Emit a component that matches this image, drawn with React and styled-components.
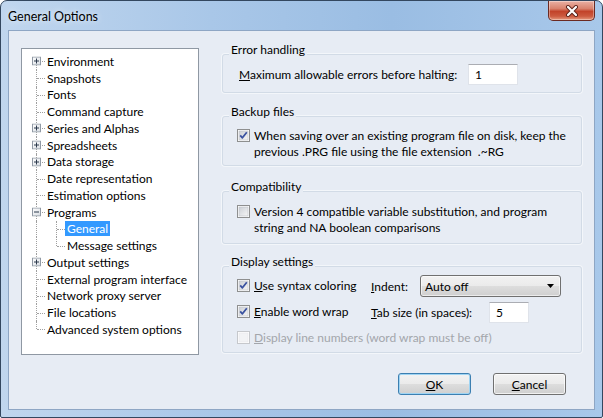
import React from 'react';
import styled, { createGlobalStyle } from 'styled-components';

const GlobalStyle = createGlobalStyle`
  html, body {
    margin: 0;
    padding: 0;
    background: #ffffff;
  }
  body {
    font-family: Lato, 'Liberation Sans', sans-serif;
    font-size: 12px;
    color: #000000;
  }
`;

const Window = styled.div`
  width: 603px;
  height: 418px;
  box-sizing: border-box;
  display: flex;
  flex-direction: column;
  border: 1px solid #33475f;
  border-radius: 7px 7px 2px 2px;
  background: linear-gradient(90deg, #c0d6ee 0%, #a9c7e8 35%, #9abde3 65%, #a8c8ea 100%);
  padding: 0 7px 7px 7px;
  overflow: hidden;
`;

const TitleBar = styled.div`
  flex: none;
  height: 29px;
  display: flex;
  align-items: flex-start;
  justify-content: space-between;
`;

const Title = styled.span`
  margin-top: 8px;
  font-size: 12.5px;
  color: #000000;
  text-shadow: 0 0 6px rgba(255, 255, 255, 0.9);
`;

const CloseButton = styled.div`
  width: 47px;
  height: 20px;
  box-sizing: border-box;
  border: 1px solid #6b2a22;
  border-top: none;
  border-radius: 0 0 5px 5px;
  background: linear-gradient(180deg, #eab1a4 0%, #d9826d 40%, #c2432a 55%, #cc5a3f 80%, #e59a7f 100%);
  display: flex;
  align-items: center;
  justify-content: center;
  box-shadow: inset 0 0 0 1px rgba(255, 255, 255, 0.35);
`;

const Client = styled.div`
  flex: 1;
  min-height: 0;
  display: flex;
  flex-direction: column;
  border: 1px solid #8ea6c4;
  background: #e7ecf4;
  padding: 17px 28px 0 12px;
`;

const Body = styled.div`
  display: flex;
  align-items: flex-start;
`;

const Tree = styled.div`
  width: 178px;
  height: 307px;
  flex: none;
  box-sizing: border-box;
  border: 1px solid #8f98a3;
  background: #ffffff;
  padding: 4px 0 0 9px;
`;

const TreeRow = styled.div`
  height: 16.75px;
  display: flex;
  align-items: stretch;
`;

const Guide = styled.div`
  width: 20px;
  flex: none;
  position: relative;
  ${(p) =>
    p.$on &&
    `&::before {
      content: '';
      position: absolute;
      left: 5px;
      top: 0;
      bottom: 0;
      border-left: 1px dotted #a0a0a0;
    }`}
`;

const Connector = styled.div`
  width: 14px;
  flex: none;
  position: relative;
  &::before {
    content: '';
    position: absolute;
    left: 5px;
    top: ${(p) => (p.$first ? '50%' : '0')};
    bottom: ${(p) => (p.$last ? '50%' : '0')};
    border-left: 1px dotted #a0a0a0;
  }
  &::after {
    content: '';
    position: absolute;
    left: 6px;
    right: 0;
    top: 50%;
    border-top: 1px dotted #a0a0a0;
  }
`;

const Expander = styled.svg`
  position: absolute;
  left: 1px;
  top: 50%;
  transform: translateY(-50%);
  z-index: 1;
`;

const TreeLabel = styled.span`
  align-self: center;
  padding: 0 2px;
  line-height: 15px;
  white-space: nowrap;
  background: ${(p) => (p.$selected ? '#3399ff' : 'transparent')};
  color: ${(p) => (p.$selected ? '#ffffff' : '#000000')};
`;

const Panel = styled.div`
  margin-left: 23px;
  margin-top: 6px;
  width: 360px;
  flex: none;
  display: flex;
  flex-direction: column;
`;

const Group = styled.div`
  position: relative;
  border: 1px solid #d2dbe6;
  border-radius: 3px;
  box-shadow: 0 0 0 1px rgba(255, 255, 255, 0.5);
  margin-top: ${(p) => p.$gap || 0}px;
  padding: ${(p) => p.$pad};
`;

const GroupTitle = styled.span`
  position: absolute;
  left: 6px;
  top: -13px;
  padding: 0 2px;
  line-height: 15px;
  background: #e7ecf4;
`;

const Row = styled.div`
  display: flex;
  align-items: center;
  height: ${(p) => p.$h || 26}px;
`;

const Label = styled.span`
  white-space: nowrap;
  color: ${(p) => (p.$disabled ? '#a3a6ab' : '#000000')};
  width: ${(p) => (p.$w ? `${p.$w}px` : 'auto')};
  flex: none;
`;

const U = styled.span`
  text-decoration: underline;
`;

const TextBox = styled.div`
  width: ${(p) => p.$w}px;
  height: 21px;
  flex: none;
  box-sizing: border-box;
  border: 1px solid #dfe3ea;
  border-top-color: #abadb3;
  background: #ffffff;
  padding-left: 6px;
  display: flex;
  align-items: center;
`;

const CheckWrap = styled.label`
  display: flex;
  align-items: flex-start;
  gap: 4px;
  line-height: 16px;
  white-space: nowrap;
  color: ${(p) => (p.$disabled ? '#a3a6ab' : '#000000')};
  width: ${(p) => (p.$w ? `${p.$w}px` : 'auto')};
  flex: none;
`;

const CheckSvg = styled.svg`
  flex: none;
  margin-top: 1px;
`;

const Select = styled.div`
  width: 141px;
  height: 22px;
  flex: none;
  box-sizing: border-box;
  border: 1px solid #707070;
  border-radius: 3px;
  background: linear-gradient(180deg, #f2f2f2 0%, #ebebeb 48%, #dddddd 52%, #cfcfcf 100%);
  box-shadow: inset 0 0 0 1px rgba(255, 255, 255, 0.6);
  display: flex;
  align-items: center;
  justify-content: space-between;
  padding: 0 6px 0 4px;
`;

const Footer = styled.div`
  display: flex;
  justify-content: flex-end;
  gap: 22px;
  margin-top: 18px;
`;

const Button = styled.div`
  width: 73px;
  height: 22px;
  box-sizing: border-box;
  border: 1px solid ${(p) => (p.$default ? '#3c7fb1' : '#707070')};
  border-radius: 3px;
  background: linear-gradient(180deg, #f2f2f2 0%, #ebebeb 48%, #dddddd 52%, #cfcfcf 100%);
  box-shadow: inset 0 0 0 1px ${(p) => (p.$default ? '#9fd4f3' : 'rgba(255,255,255,0.7)')};
  display: flex;
  align-items: center;
  justify-content: center;
`;

const PlusMinus = ({ minus }) => (
  <Expander width="9" height="9" viewBox="0 0 9 9">
    <defs>
      <linearGradient id={minus ? 'gm' : 'gp'} x1="0" y1="0" x2="1" y2="1">
        <stop offset="0" stopColor="#ffffff" />
        <stop offset="1" stopColor="#d8dde3" />
      </linearGradient>
    </defs>
    <rect x="0.5" y="0.5" width="8" height="8" fill={`url(#${minus ? 'gm' : 'gp'})`} stroke="#919aa5" />
    <path d="M2 4.5h5" stroke="#2d3a4d" />
    {!minus && <path d="M4.5 2v5" stroke="#2d3a4d" />}
  </Expander>
);

const CheckBox = ({ checked, disabled }) => (
  <CheckSvg width="13" height="13" viewBox="0 0 13 13">
    <defs>
      <linearGradient id="cbg" x1="0" y1="0" x2="1" y2="1">
        <stop offset="0" stopColor="#cbcfd5" />
        <stop offset="1" stopColor="#f6f6f6" />
      </linearGradient>
    </defs>
    <rect x="0.5" y="0.5" width="12" height="12" fill="#ffffff" stroke={disabled ? '#c6c8cc' : '#8e8f8f'} />
    <rect x="2" y="2" width="9" height="9" fill={disabled ? '#f2f3f5' : 'url(#cbg)'} stroke={disabled ? '#e6e7ea' : '#bcc0c6'} strokeWidth="0.6" />
    {checked && (
      <path d="M3.2 6.4 L5.4 8.8 L9.8 3.2" fill="none" stroke="#3a52a0" strokeWidth="1.8" strokeLinejoin="round" />
    )}
  </CheckSvg>
);

const treeData = [
  { label: 'Environment', exp: 'plus' },
  { label: 'Snapshots' },
  { label: 'Fonts' },
  { label: 'Command capture' },
  { label: 'Series and Alphas', exp: 'plus' },
  { label: 'Spreadsheets', exp: 'plus' },
  { label: 'Data storage', exp: 'plus' },
  { label: 'Date representation' },
  { label: 'Estimation options' },
  {
    label: 'Programs',
    exp: 'minus',
    children: [{ label: 'General', selected: true }, { label: 'Message settings' }],
  },
  { label: 'Output settings', exp: 'plus' },
  { label: 'External program interface' },
  { label: 'Network proxy server' },
  { label: 'File locations' },
  { label: 'Advanced system options' },
];

const flatten = (items, depth = 0, guides = []) =>
  items.flatMap((item, i) => {
    const last = i === items.length - 1;
    const row = { ...item, depth, guides, first: depth === 0 && i === 0, last };
    const kids = item.children ? flatten(item.children, depth + 1, [...guides, !last]) : [];
    return [row, ...kids];
  });

const rows = flatten(treeData);

export default function App() {
  return (
    <>
      <GlobalStyle />
      <Window>
        <TitleBar>
          <Title>General Options</Title>
          <CloseButton>
            <svg width="14" height="12" viewBox="0 0 14 12">
              <path d="M3 2 L11 10 M11 2 L3 10" stroke="#5a2219" strokeWidth="4" strokeLinecap="round" />
              <path d="M3 2 L11 10 M11 2 L3 10" stroke="#ffffff" strokeWidth="2.2" strokeLinecap="round" />
            </svg>
          </CloseButton>
        </TitleBar>
        <Client>
          <Body>
            <Tree>
              {rows.map((r) => (
                <TreeRow key={r.label}>
                  {r.guides.map((g, gi) => (
                    <Guide key={gi} $on={g} />
                  ))}
                  <Connector $first={r.first} $last={r.last}>
                    {r.exp && <PlusMinus minus={r.exp === 'minus'} />}
                  </Connector>
                  <TreeLabel $selected={r.selected}>{r.label}</TreeLabel>
                </TreeRow>
              ))}
            </Tree>
            <Panel>
              <Group $pad="9px 0 7px 16px">
                <GroupTitle>Error handling</GroupTitle>
                <Row $h={21}>
                  <Label $w={229}>
                    <U>M</U>aximum allowable errors before halting:
                  </Label>
                  <TextBox $w={50}>1</TextBox>
                </Row>
              </Group>
              <Group $gap={23} $pad="11px 0 5px 14px">
                <GroupTitle>Backup files</GroupTitle>
                <CheckWrap>
                  <CheckBox checked />
                  <span>
                    When saving over an existing program file on disk, keep the
                    <br />
                    previous .PRG file using the file extension&nbsp; .~RG
                  </span>
                </CheckWrap>
              </Group>
              <Group $gap={25} $pad="12px 0 7px 14px">
                <GroupTitle>Compatibility</GroupTitle>
                <CheckWrap>
                  <CheckBox />
                  <span>
                    Version 4 compatible variable substitution, and program
                    <br />
                    string and NA boolean comparisons
                  </span>
                </CheckWrap>
              </Group>
              <Group $gap={22} $pad="6px 0 1px 14px">
                <GroupTitle>Display settings</GroupTitle>
                <Row>
                  <CheckWrap $w={134}>
                    <CheckBox checked />
                    <span>
                      <U>U</U>se syntax coloring
                    </span>
                  </CheckWrap>
                  <Label $w={49}>
                    <U>I</U>ndent:
                  </Label>
                  <Select>
                    <span>Auto off</span>
                    <svg width="7" height="4" viewBox="0 0 7 4">
                      <path d="M0 0h7L3.5 4z" fill="#000000" />
                    </svg>
                  </Select>
                </Row>
                <Row>
                  <CheckWrap $w={134}>
                    <CheckBox checked />
                    <span>
                      <U>E</U>nable word wrap
                    </span>
                  </CheckWrap>
                  <Label $w={118}>
                    <U>T</U>ab size (in spaces):
                  </Label>
                  <TextBox $w={40}>5</TextBox>
                </Row>
                <Row>
                  <CheckWrap $disabled>
                    <CheckBox disabled />
                    <span>
                      <U>D</U>isplay line numbers (word wrap must be off)
                    </span>
                  </CheckWrap>
                </Row>
              </Group>
            </Panel>
          </Body>
          <Footer>
            <Button $default>
              <span>
                <U>O</U>K
              </span>
            </Button>
            <Button>
              <span>
                <U>C</U>ancel
              </span>
            </Button>
          </Footer>
        </Client>
      </Window>
    </>
  );
}
